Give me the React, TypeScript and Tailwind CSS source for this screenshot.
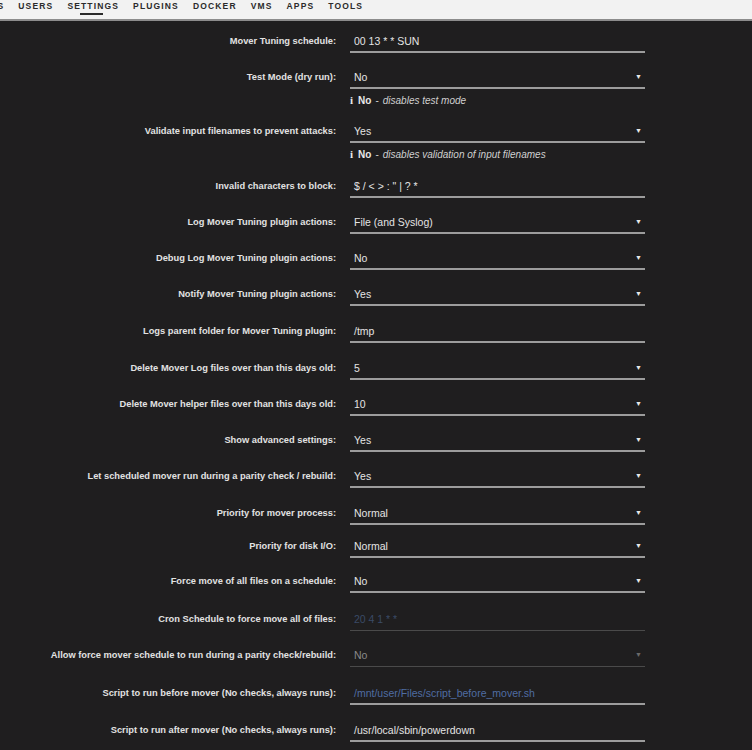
type Row = {
  label: string;
  value: string;
  kind: "input" | "select";
  h: string;
  info?: { bold: string; text: string };
  tone?: "normal" | "link" | "faded" | "off";
};

const rows: Row[] = [
  { label: "Mover Tuning schedule:", value: "00 13 * * SUN", kind: "input", h: "h-[32px]" },
  {
    label: "Test Mode (dry run):",
    value: "No",
    kind: "select",
    h: "h-9",
    info: { bold: "No", text: "disables test mode" },
  },
  {
    label: "Validate input filenames to prevent attacks:",
    value: "Yes",
    kind: "select",
    h: "h-9",
    info: { bold: "No", text: "disables validation of input filenames" },
  },
  { label: "Invalid characters to block:", value: '$ / < > : " | ? *', kind: "input", h: "h-[37px]" },
  { label: "Log Mover Tuning plugin actions:", value: "File (and Syslog)", kind: "select", h: "h-9" },
  { label: "Debug Log Mover Tuning plugin actions:", value: "No", kind: "select", h: "h-9" },
  { label: "Notify Mover Tuning plugin actions:", value: "Yes", kind: "select", h: "h-9" },
  { label: "Logs parent folder for Mover Tuning plugin:", value: "/tmp", kind: "input", h: "h-[37px]" },
  { label: "Delete Mover Log files over than this days old:", value: "5", kind: "select", h: "h-[37px]" },
  { label: "Delete Mover helper files over than this days old:", value: "10", kind: "select", h: "h-9" },
  { label: "Show advanced settings:", value: "Yes", kind: "select", h: "h-9" },
  { label: "Let scheduled mover run during a parity check / rebuild:", value: "Yes", kind: "select", h: "h-9" },
  { label: "Priority for mover process:", value: "Normal", kind: "select", h: "h-[37px]" },
  { label: "Priority for disk I/O:", value: "Normal", kind: "select", h: "h-[33px]" },
  { label: "Force move of all files on a schedule:", value: "No", kind: "select", h: "h-[35px]" },
  { label: "Cron Schedule to force move all of files:", value: "20 4 1 * *", kind: "input", h: "h-[38px]", tone: "faded" },
  {
    label: "Allow force mover schedule to run during a parity check/rebuild:",
    value: "No",
    kind: "select",
    h: "h-9",
    tone: "off",
  },
  {
    label: "Script to run before mover (No checks, always runs):",
    value: "/mnt/user/Files/script_before_mover.sh",
    kind: "input",
    h: "h-[38px]",
    tone: "link",
  },
  { label: "Script to run after mover (No checks, always runs):", value: "/usr/local/sbin/powerdown", kind: "input", h: "h-[37px]" },
];

const tabs = ["SHARES", "USERS", "SETTINGS", "PLUGINS", "DOCKER", "VMS", "APPS", "TOOLS"];

function Field({ row }: { row: Row }) {
  const dim = row.tone === "faded" || row.tone === "off";
  const textColor =
    row.tone === "link"
      ? "text-[#4f6da3]"
      : row.tone === "faded"
        ? "text-[#3a4a66]"
        : row.tone === "off"
          ? "text-[#8a8a8a]"
          : "text-[#e4e4e4]";
  return (
    <div
      className={
        "flex h-6 w-[295px] items-center justify-between pl-[4px] pr-[3px] pt-[3px] " +
        (dim ? "border-b border-[#4a4a4a] pb-px" : "border-b-2 border-[#9c9c9c]")
      }
    >
      <span className={"text-[10.5px] " + textColor}>{row.value}</span>
      {row.kind === "select" && (
        <span className={"text-[7px] " + (dim ? "text-[#6a6a6a]" : "text-[#e8e8e8]")}>▼</span>
      )}
    </div>
  );
}

export default function App() {
  return (
    <div className="min-h-[750px] bg-[#1f1e1f] font-['Liberation_Sans',Arial,sans-serif]">
      <div className="flex h-[21px] items-start gap-[14px] overflow-hidden border-b-2 border-[#8c8c8c] bg-[#f2f2f2] pt-[1px]">
        {tabs.map((t, i) => (
          <div
            key={t}
            className={
              "relative shrink-0 text-[8.5px] font-bold leading-[11px] tracking-[1.15px] text-[#2b2b2b] " +
              (i === 0 ? "-ml-[38px]" : "")
            }
          >
            {t}
            {t === "SETTINGS" && (
              <span className="absolute left-[13px] top-[12px] h-[2px] w-[23px] bg-[#2b2b2b]" />
            )}
          </div>
        ))}
      </div>

      <div className="flex flex-col">
        {rows.map((row) => (
          <div key={row.label} className="flex flex-col">
            <div className={"flex items-end " + row.h}>
              <div className="flex h-6 w-[336px] items-center justify-end pt-[1px] text-right text-[9.3px] font-bold text-[#e2e2e2]">
                {row.label}
              </div>
              <div className="ml-[14px]">
                <Field row={row} />
              </div>
            </div>
            {row.info && (
              <div className="ml-[350px] flex h-[18px] items-center pt-[4px] text-[10px] text-[#d0d0d0]">
                <span className="mr-[5px] font-['Liberation_Serif',serif] text-[11px] font-bold text-[#e8e8e8]">
                  i
                </span>
                <span className="font-bold text-[#e8e8e8]">{row.info.bold}</span>
                <span className="mx-[4px]">-</span>
                <span className="italic">{row.info.text}</span>
              </div>
            )}
          </div>
        ))}
      </div>
    </div>
  );
}
